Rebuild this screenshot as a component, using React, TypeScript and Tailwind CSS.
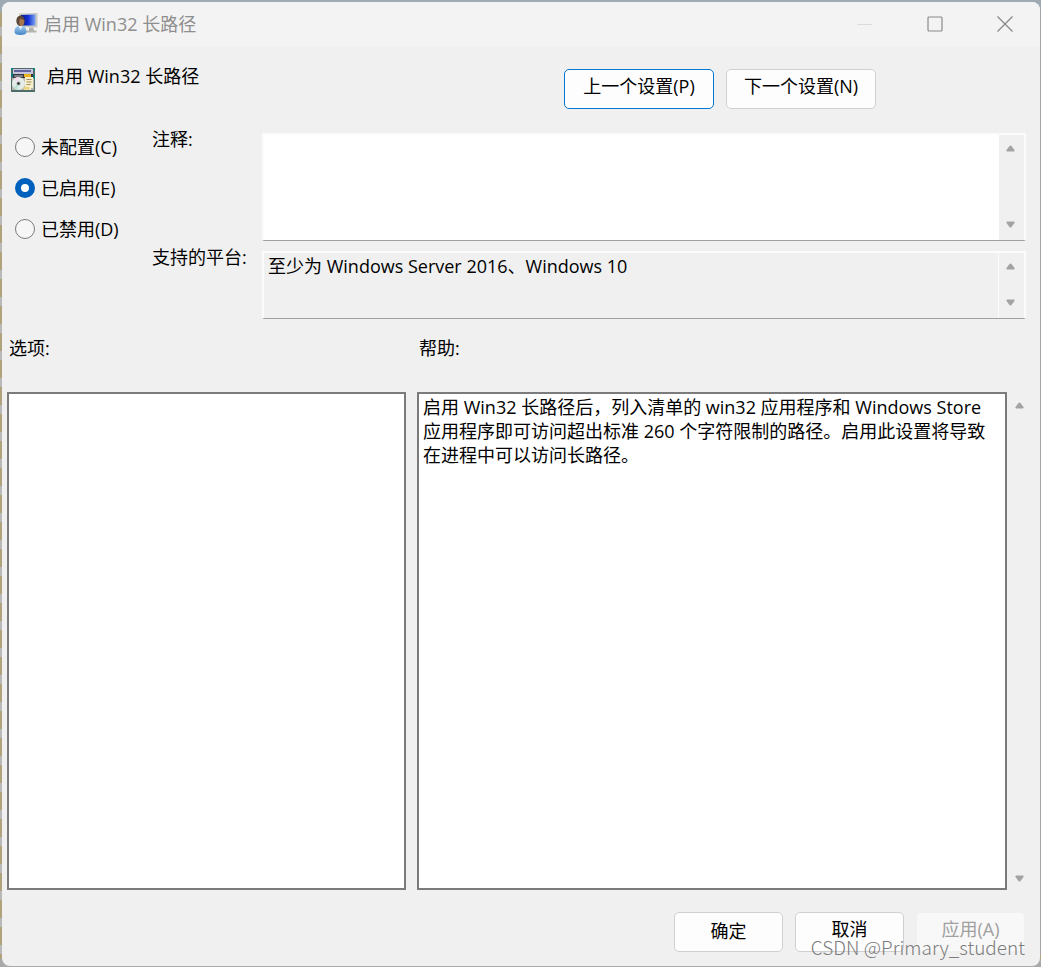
import { useState } from 'react';
import type { ReactNode } from 'react';

const PLATFORMS = '至少为 Windows Server 2016、Windows 10';
const HELP_TEXT =
  '启用 Win32 长路径后，列入清单的 win32 应用程序和 Windows Store 应用程序即可访问超出标准 260 个字符限制的路径。启用此设置将导致在进程中可以访问长路径。';

const STATES = [
  { value: 'none', label: '未配置(C)' },
  { value: 'enabled', label: '已启用(E)' },
  { value: 'disabled', label: '已禁用(D)' },
];

// ── Icons ───────────────────────────────────────────────────────────────────
function UserMonitorIcon() {
  return (
    <svg className="size-6 shrink-0" viewBox="0 0 24 24" aria-hidden="true">
      <defs>
        <linearGradient id="screen" x1="0" y1="0" x2="1" y2="0">
          <stop offset="0" stopColor="#0a1a8c" />
          <stop offset="0.5" stopColor="#1230d8" />
          <stop offset="1" stopColor="#7fa6f0" />
        </linearGradient>
        <linearGradient id="shirt" x1="0" y1="0" x2="0" y2="1">
          <stop offset="0" stopColor="#a9d0f2" />
          <stop offset="1" stopColor="#4284c6" />
        </linearGradient>
      </defs>
      <path d="M5 1.5 23.5 1v14.5L5 15z" fill="#c9c9c2" />
      <path d="M7 3 21.5 2.5v11L7 13.5z" fill="url(#screen)" />
      <path d="M15 15.5h4.5l.5 3h2.5v2H12v-2h3z" fill="#b4b4ae" />
      <path d="M.5 20c0-4 2-6.500 6-6.500s6 2.500 6 6.500c0 2-2 3-6 3s-6-1-6-3z" fill="url(#shirt)" />
      <path d="m4.500 14 2.200 4 2-4z" fill="#e8f2fb" />
      <ellipse cx="6.500" cy="8.800" rx="4.200" ry="5.300" fill="#5b4636" />
      <path d="M6 6.500c2 1 4 .5 4.300 2.500.2 3-1.300 5-3 5.200C5.200 14 4.800 10 6 6.500z" fill="#a8764f" />
    </svg>
  );
}

function PolicyIcon() {
  return (
    <svg className="size-6 shrink-0" viewBox="0 0 24 24" aria-hidden="true">
      <path d="M0 0h24v24H0z" fill="#4d6b68" />
      <path d="M0 0h2v2H0zM22 0h2v2h-2zM0 5h2v4H0zM22 7h2v5h-2z" fill="#10807f" />
      <path d="M2 1h20v5H2z" fill="#c4c4dc" />
      <path d="M3 2h17v2H3z" fill="#62629c" />
      <path d="M2 6h20v4H2z" fill="#35353f" />
      <path d="M3 7h9v2H3z" fill="#7d7d85" />
      <path d="M13 6h7v3h-7z" fill="#e8b31d" />
      <path d="M1 10h22v12H1z" fill="#b5b5ad" />
      <circle cx="7.500" cy="15.500" r="6.500" fill="#e4ece9" />
      <path d="M7.500 15.500 3 11a6.500 6.500 0 0 1 4-2z" fill="#f8d9ef" />
      <path d="m7.500 15.500-5 4a6.500 6.500 0 0 0 4 2.300z" fill="#b8e6cf" />
      <circle cx="7.500" cy="15.500" r="2.200" fill="#b9c0bd" />
      <circle cx="7.500" cy="15.500" r="1.200" fill="#222" />
      <path d="M14 9h8v11h-2v2h-7v-3h1z" fill="#f7efcb" />
      <path d="M15.500 11.500h5M15.500 14h5M15.500 16.500h4" stroke="#9d8c55" strokeWidth="1" />
      <path d="M12.500 19h6v2.500h-6z" fill="#e9d27c" />
    </svg>
  );
}

function Arrow({ down = false }: { down?: boolean }) {
  return (
    <svg className="w-[9px] h-[7px]" viewBox="0 0 9 7" aria-hidden="true">
      <path
        d={down ? 'M1 .5h7q1 .5.5 1.500L5.500 6q-1 1-2 0L.5 2Q0 1 1 .5z' : 'M1 6.500h7q1-.5.5-1.500L5.500 1q-1-1-2 0L.5 5Q0 6 1 6.500z'}
        fill="#a3a3a3"
      />
    </svg>
  );
}

// ── Controls ────────────────────────────────────────────────────────────────
function ScrollBar({ className }: { className: string }) {
  return (
    <div className={`flex shrink-0 flex-col items-center justify-between bg-[#f0f0f0] ${className}`}>
      <button type="button" aria-label="向上滚动" className="flex"><Arrow /></button>
      <button type="button" aria-label="向下滚动" className="flex"><Arrow down /></button>
    </div>
  );
}

function DialogButton({ children, className, disabled }: { children: ReactNode; className: string; disabled?: boolean }) {
  return (
    <button
      type="button"
      disabled={disabled}
      className={`flex shrink-0 justify-center rounded-[5px] border bg-[#fdfdfd] leading-6 disabled:border-[#f0f0f0] disabled:bg-[#f8f8f8] disabled:text-[#a0a0a0] ${className}`}
    >
      {children}
    </button>
  );
}

function TitleBar() {
  return (
    <header className="flex h-[45px] shrink-0 items-center bg-[#f3f3f3] pb-0.5 pl-3 text-[#8f8f8f]">
      <UserMonitorIcon />
      <h1 className="ml-1.5 flex-1">启用 Win32 长路径</h1>
      <button type="button" aria-label="最小化" disabled className="flex h-full w-[70px] items-center justify-center">
        <svg className="size-4" viewBox="0 0 16 16"><path d="M.5 8.500h15" stroke="#dadada" /></svg>
      </button>
      <button type="button" aria-label="最大化" className="flex h-full w-[70px] items-center justify-center">
        <svg className="size-4" viewBox="0 0 16 16" fill="none">
          <rect x="1" y="1" width="14" height="14" rx="1" stroke="#8a8a8a" strokeWidth="1.200" />
        </svg>
      </button>
      <button type="button" aria-label="关闭" className="flex h-full w-[70px] items-center justify-center">
        <svg className="size-4" viewBox="0 0 16 16"><path d="m.5.5 15 15m0-15-15 15" stroke="#858585" strokeWidth="1.200" /></svg>
      </button>
    </header>
  );
}

export default function App() {
  const [state, setState] = useState('enabled');
  const [comment, setComment] = useState('');

  return (
    <div className="relative flex min-h-screen flex-col bg-[repeating-linear-gradient(#b9b9b9_0_9px,#b0a37c_9px_27px)] pt-0.5 pr-px pb-px pl-0.5 font-['Open_Sans','Noto_Sans_CJK_SC',sans-serif] text-[18px] leading-6 text-black">
      {/* Desktop edge showing around the window */}
      <div className="absolute inset-x-0 top-0 h-3 bg-[#9eabb5]" />
      <div className="absolute inset-y-3 right-0 w-2 bg-[#a5a5a5]" />
      <div className="absolute inset-x-0 bottom-0 h-2 bg-[#a9a9a9]" />

      <div className="relative flex flex-1 flex-col overflow-hidden rounded-lg bg-[#f0f0f0]">
        <TitleBar />

        {/* Setting name and navigation */}
        <div className="flex items-start pt-[21px] pr-[164px] pl-[9px]">
          <PolicyIcon />
          <h2 className="-mt-1 ml-3 flex-1">启用 Win32 长路径</h2>
          <div className="flex gap-3 pt-px">
            <DialogButton className="h-10 w-[150px] border-[#0078d4] pt-1">上一个设置(P)</DialogButton>
            <DialogButton className="h-10 w-[150px] border-[#d0d0d0] pt-1">下一个设置(N)</DialogButton>
          </div>
        </div>

        {/* State, comment and supported platforms */}
        <div className="flex pt-6 pr-[14px]">
          <fieldset className="flex w-[150px] shrink-0 flex-col gap-[17px] pt-0.5 pl-[13px]">
            {STATES.map((s) => (
              <label key={s.value} className="flex items-center gap-1.5">
                <input
                  type="radio"
                  name="state"
                  value={s.value}
                  checked={state === s.value}
                  onChange={() => setState(s.value)}
                  className="size-5 shrink-0 appearance-none rounded-full border border-[#7a7a7a] bg-[#f6f6f6] checked:border-[6px] checked:border-[#0060bd] checked:bg-white"
                />
                {s.label}
              </label>
            ))}
          </fieldset>
          <div className="grid flex-1 grid-cols-[110px_1fr] gap-y-2.5">
            <label htmlFor="comment" className="-mt-1.5">注释:</label>
            <div className="flex h-[108px] border-2 border-b border-[#fbfbfb] border-b-[#a0a0a0] bg-white">
              <textarea
                id="comment"
                value={comment}
                onChange={(e) => setComment(e.target.value)}
                className="flex-1 resize-none overflow-hidden px-1 outline-none"
              />
              <ScrollBar className="w-[25px] pt-2.5 pb-3 pr-0.5" />
            </div>
            <label htmlFor="platforms" className="-mt-1.5">支持的平台:</label>
            <div className="flex h-[68px] border-2 border-b border-[#fbfbfb] border-b-[#a0a0a0]">
              <textarea
                id="platforms"
                readOnly
                value={PLATFORMS}
                className="flex-1 resize-none overflow-hidden px-1 pt-px outline-none"
              />
              <ScrollBar className="w-[26px] border-l border-[#fbfbfb] pt-2.5 pb-3 pr-0.5" />
            </div>
          </div>
        </div>

        {/* Options and help */}
        <div className="grid flex-1 grid-cols-[minmax(0,399fr)_minmax(0,614fr)] grid-rows-[auto_1fr] gap-x-[11px] pt-[17px] pr-[9px] pl-[5px]">
          <div className="pb-8 pl-0.5">选项:</div>
          <label htmlFor="help" className="pb-8 pl-0.5">帮助:</label>
          <div className="border-2 border-[#7b7b7b] bg-white" />
          <div className="flex">
            <textarea
              id="help"
              readOnly
              value={HELP_TEXT}
              className="flex-1 resize-none overflow-hidden border-2 border-[#7b7b7b] bg-white py-px pr-3 pl-1 outline-none"
            />
            <ScrollBar className="w-6 pt-2.5 pb-2" />
          </div>
        </div>

        <footer className="flex justify-end gap-3 pt-[22px] pr-[15px] pb-[14px]">
          <DialogButton className="h-10 w-[109px] border-[#d0d0d0] pt-1.5">确定</DialogButton>
          <DialogButton className="h-10 w-[109px] border-[#d0d0d0] pt-1">取消</DialogButton>
          <DialogButton disabled className="h-10 w-[109px] pt-1">应用(A)</DialogButton>
        </footer>
      </div>

      <div className="pointer-events-none absolute right-4 bottom-2 font-['Noto_Sans_CJK_SC',sans-serif] text-[19px] font-light text-[#7c7c7c]">
        CSDN @Primary_student
      </div>
    </div>
  );
}
